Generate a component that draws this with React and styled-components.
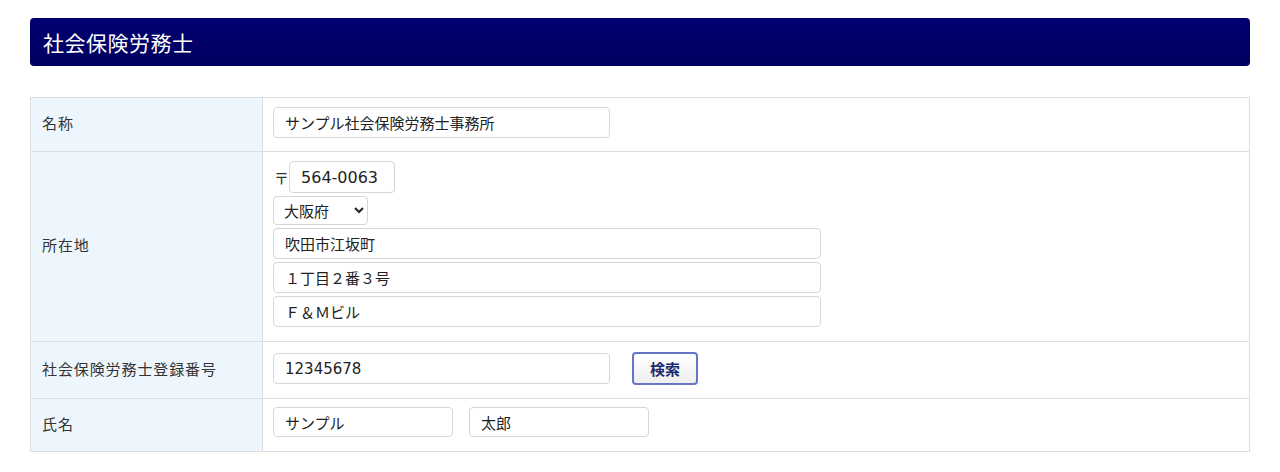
import React from "react";
import styled, { createGlobalStyle } from "styled-components";

const GlobalStyle = createGlobalStyle`
  body {
    margin: 0;
    background: #fff;
    font-family: "Noto Sans CJK JP", "Noto Sans", sans-serif;
    color: #333;
  }
`;

const Page = styled.div`
  padding: 18px 30px 20px;
`;

const Heading = styled.h2`
  margin: 0 0 31px;
  height: 48px;
  padding: 0 13px 1px;
  box-sizing: border-box;
  display: flex;
  align-items: center;
  border-radius: 4px;
  background: linear-gradient(#000074, #00005e);
  color: #fff;
  font-size: 21px;
  letter-spacing: 0.5px;
  font-weight: normal;
`;

const Table = styled.table`
  width: 100%;
  border-collapse: collapse;
  font-size: 15px;
`;

const Label = styled.th`
  width: 209px;
  padding: 0 11px 4px;
  text-align: left;
  font-weight: normal;
  letter-spacing: 0.9px;
  background: #edf5fd;
  border: 1px solid #dddddd;
  border-right-color: #d3dde8;
  height: ${(p) => p.h - 4}px;
`;

const Cell = styled.td`
  vertical-align: top;
  padding: ${(p) => p.pt || 9}px 10px 0;
  border: 1px solid #dddddd;
`;

const Input = styled.input`
  box-sizing: border-box;
  display: block;
  width: ${(p) => p.w}px;
  height: ${(p) => p.h || 31}px;
  margin: 0;
  padding: 0 11px;
  border: 1px solid #d6d6d6;
  border-radius: 4px;
  font-family: "DejaVu Sans", "Noto Sans CJK JP", sans-serif;
  font-size: ${(p) => p.fs || 15}px;
  color: #222;
  background: #fff;
`;

const Stack = styled.div`
  display: flex;
  flex-direction: column;
  gap: 3px;
`;

const Line = styled.div`
  display: flex;
  align-items: center;
  gap: ${(p) => p.gap || 0}px;
`;

const Zip = styled.span`
  font-size: 15px;
  margin: 0 0 0 1px;
`;

const Select = styled.select`
  box-sizing: border-box;
  width: 95px;
  height: 29px;
  padding: 0 6px;
  border: 1px solid #d6d6d6;
  border-radius: 4px;
  font: inherit;
  font-size: 15px;
  color: #222;
  background: #fff;
`;

const Button = styled.button`
  box-sizing: border-box;
  width: 66px;
  height: 33px;
  margin-left: 22px;
  border: 2px solid #6675c8;
  border-radius: 4px;
  background: linear-gradient(#ffffff, #eeeeee);
  color: #1a2a70;
  font: inherit;
  font-size: 15px;
  font-weight: bold;
`;

export default function App() {
  return (
    <Page>
      <GlobalStyle />
      <Heading>社会保険労務士</Heading>
      <Table>
        <tbody>
          <tr>
            <Label h={53}>名称</Label>
            <Cell pt={9}>
              <Input w={337} h={31} defaultValue="サンプル社会保険労務士事務所" />
            </Cell>
          </tr>
          <tr>
            <Label h={189}>所在地</Label>
            <Cell pt={9}>
              <Stack>
                <Line>
                  <Zip>〒</Zip>
                  <Input w={106} h={32} fs={16} defaultValue="564-0063" />
                </Line>
                <Line>
                  <Select defaultValue="大阪府">
                    <option>大阪府</option>
                  </Select>
                </Line>
                <Input w={548} defaultValue="吹田市江坂町" />
                <Input w={548} defaultValue="１丁目２番３号" />
                <Input w={548} defaultValue="Ｆ＆Ｍビル" />
              </Stack>
            </Cell>
          </tr>
          <tr>
            <Label h={56}>社会保険労務士登録番号</Label>
            <Cell pt={10}>
              <Line>
                <Input w={337} defaultValue="12345678" />
                <Button>検索</Button>
              </Line>
            </Cell>
          </tr>
          <tr>
            <Label h={52}>氏名</Label>
            <Cell pt={8}>
              <Line gap={16}>
                <Input w={180} h={30} defaultValue="サンプル" />
                <Input w={180} h={30} defaultValue="太郎" />
              </Line>
            </Cell>
          </tr>
        </tbody>
      </Table>
    </Page>
  );
}
